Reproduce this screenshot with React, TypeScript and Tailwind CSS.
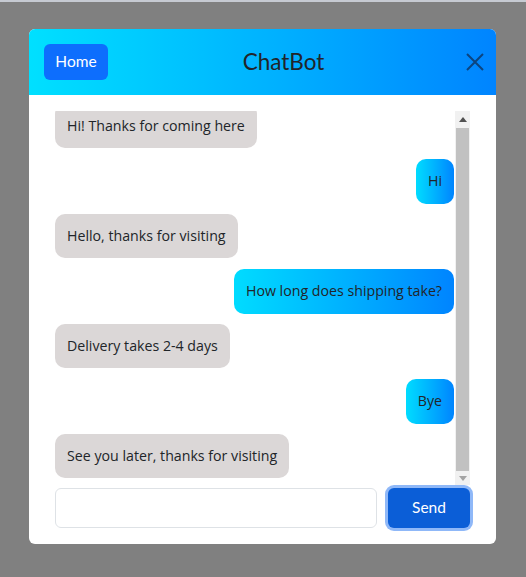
import React, { useEffect, useRef } from "react";

const messages: { from: "bot" | "user"; text: string }[] = [
  { from: "bot", text: "Hi! Thanks for coming here" },
  { from: "user", text: "Hi" },
  { from: "bot", text: "Hello, thanks for visiting" },
  { from: "user", text: "How long does shipping take?" },
  { from: "bot", text: "Delivery takes 2-4 days" },
  { from: "user", text: "Bye" },
  { from: "bot", text: "See you later, thanks for visiting" },
];

export default function App() {
  const ref = useRef<HTMLDivElement>(null);
  useEffect(() => {
    if (ref.current) ref.current.scrollTop = ref.current.scrollHeight;
  }, []);
  return (
    <div className="min-h-[577px] w-full bg-[#808080] border-t-2 border-[#c6cad2] pt-[27px] pl-[29px] font-['Lato',sans-serif]">
      <div className="w-[467px] h-[515px] bg-white rounded-md overflow-hidden flex flex-col">
        <div className="h-[66px] shrink-0 bg-gradient-to-r from-[#00e0ff] to-[#0084ff] flex items-center justify-between pl-[15px] pr-[11px]">
          <button className="h-[36px] w-[64px] rounded-md bg-[#0d6efd] text-white text-[15.5px] leading-none">
            Home
          </button>
          <div className="text-[22.5px] text-[#212529] leading-none mt-[1px] -ml-[6px]">ChatBot</div>
          <svg width="20" height="20" viewBox="0 0 20 20">
            <path d="M2 2 L18 18 M18 2 L2 18" stroke="#0c447f" strokeWidth="2" />
          </svg>
        </div>
        <div className="flex-1 flex flex-col px-[26px] pt-[16px] pb-[16px]">
          <div className="h-[374px] flex">
            <div
              ref={ref}
              className="flex-1 overflow-hidden flex flex-col gap-[10.5px] pb-[7px] font-['Comic_Sans_MS','Open_Sans',sans-serif] text-[14.2px] text-[#212529]"
            >
              {messages.map((m, i) =>
                m.from === "bot" ? (
                  <div key={i} className="self-start shrink-0 h-[44px] flex items-center px-[12px] rounded-[10px] bg-[#dbd7d7]">
                    {m.text}
                  </div>
                ) : (
                  <div
                    key={i}
                    className="self-end shrink-0 h-[45px] flex items-center px-[12px] rounded-[10px] bg-gradient-to-r from-[#00dcff] to-[#0084ff]"
                  >
                    {m.text}
                  </div>
                )
              )}
            </div>
            <div className="w-[15px] shrink-0 ml-[1px] bg-[#f1f1f1] flex flex-col">
              <div className="h-[17px] flex items-center justify-center">
                <svg width="8" height="5" viewBox="0 0 8 5">
                  <path d="M0 5 L4 0 L8 5 Z" fill="#505050" />
                </svg>
              </div>
              <div className="flex-1 bg-[#c1c1c1] mx-[1px]" />
              <div className="h-[14px] flex items-center justify-center">
                <svg width="8" height="5" viewBox="0 0 8 5">
                  <path d="M0 0 L4 5 L8 0 Z" fill="#a3a3a3" />
                </svg>
              </div>
            </div>
          </div>
          <div className="flex items-center gap-[11px] mt-[3px]">
            <input className="h-[40px] w-[322px] rounded-md border border-[#dee2e6] outline-none px-3" />
            <button className="h-[40px] w-[82px] rounded-md bg-[#0b5ed7] text-white text-[15.5px] ring-[3px] ring-[#8fb8f8]">
              Send
            </button>
          </div>
        </div>
      </div>
    </div>
  );
}
